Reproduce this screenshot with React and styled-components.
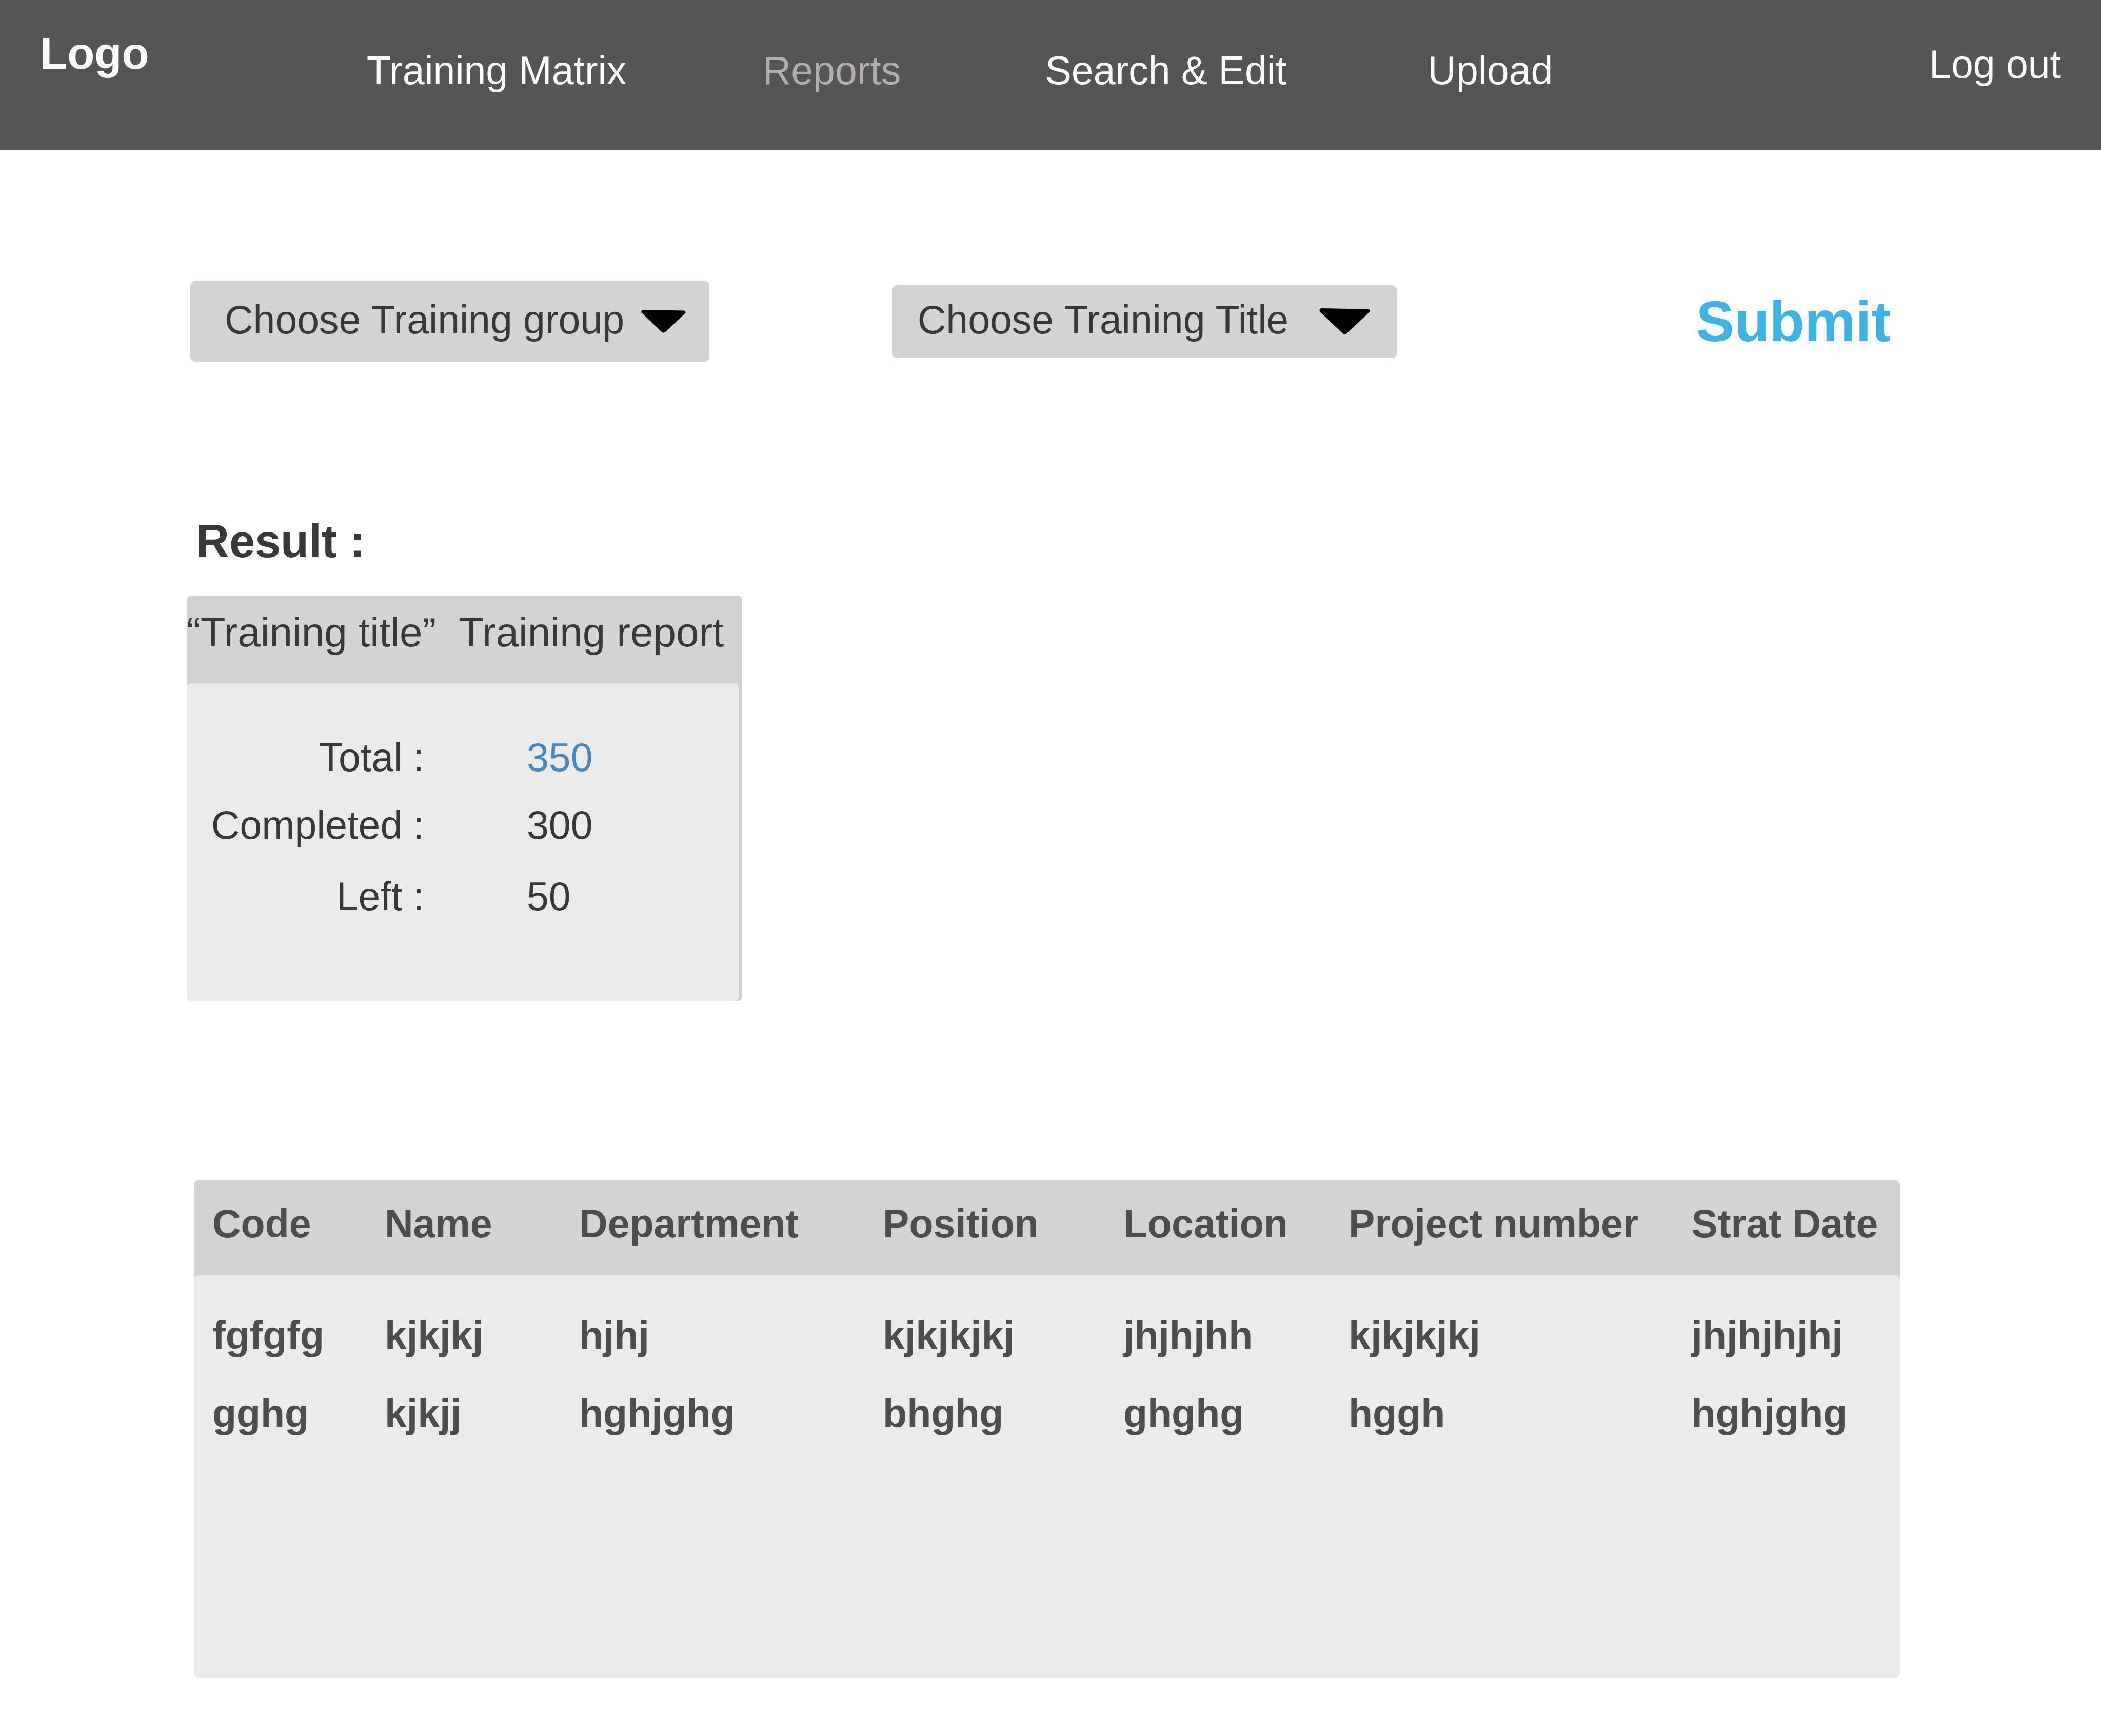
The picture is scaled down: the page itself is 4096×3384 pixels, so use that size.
import React from "react";
import styled, { createGlobalStyle } from "styled-components";

const color = {
  bar: "#555555",
  barText: "#fdfcfd",
  barMuted: "#b3aeae",
  panel: "#d4d2d3",
  body: "#ebebeb",
  ink: "#393738",
  cell: "#4d4d4d",
  accent: "#3bb3e4",
  link: "#4689be",
};

const GlobalStyle = createGlobalStyle`
  *, *::before, *::after { box-sizing: border-box; }
  body {
    margin: 0;
    background: #ffffff;
    color: ${color.ink};
    font-family: "Liberation Sans", Arial, sans-serif;
    font-size: 77px;
    line-height: 88px;
  }
`;

const Header = styled.header`
  display: grid;
  grid-template-columns: 637fr 3047fr auto;
  align-items: start;
  min-height: 292px;
  padding: 54px 78px 0;
  background: ${color.bar};
`;

const Logo = styled.a`
  color: ${color.barText};
  font-size: 87px;
  font-weight: 700;
  line-height: 100px;
  text-decoration: none;
`;

const Nav = styled.nav`
  display: grid;
  grid-template-columns: 772fr 551fr 746fr 978fr;
  padding-top: 39px;
`;

const BarLink = styled.a`
  color: ${(p) => (p.$muted ? color.barMuted : color.barText)};
  text-decoration: none;
  white-space: nowrap;
`;

const Session = styled.div`
  padding-top: 27px;
`;

const Main = styled.main`
  padding: 256px 392px 114px 364px;
`;

const Filters = styled.form`
  display: grid;
  grid-template-columns: 1011fr 983fr 607fr;
  column-gap: 356px;
  align-items: center;
  padding: 0 18px 0 7px;
`;

const Picker = styled.div`
  display: grid;
  grid-template-columns: 1fr;
  align-items: center;
  height: ${(p) => (p.$tall ? 157 : 142)}px;
  border-radius: 9px;
  background: ${color.panel};

  > * {
    grid-area: 1 / 1;
  }

  > svg {
    justify-self: end;
    width: ${(p) => (p.$tall ? 87 : 99)}px;
    margin-right: ${(p) => (p.$tall ? 46 : 52)}px;
    pointer-events: none;
  }
`;

const Select = styled.select`
  appearance: none;
  width: 100%;
  height: 100%;
  margin: 0;
  padding: 0 0 8px ${(p) => (p.$tall ? 67 : 50)}px;
  border: 0;
  border-radius: 9px;
  background: transparent;
  color: ${color.ink};
  font: inherit;
`;

const Submit = styled.button`
  justify-self: end;
  padding: 0;
  border: 0;
  background: none;
  color: ${color.accent};
  font-family: inherit;
  font-size: 112px;
  font-weight: 700;
  line-height: 128px;
`;

const ResultTitle = styled.h2`
  margin: 300px 0 56px;
  padding-left: 18px;
  font-size: 90px;
  font-weight: 700;
  line-height: 100px;
`;

const Card = styled.section`
  width: 1083px;
  max-width: 100%;
  padding-right: 7px;
  border-radius: 9px;
  background: ${color.panel};
`;

const CardTitle = styled.h3`
  display: flex;
  gap: 44px;
  min-height: 171px;
  margin: 0;
  padding-top: 28px;
  font-size: 80px;
  font-weight: 400;
  white-space: nowrap;
`;

const Stats = styled.dl`
  display: grid;
  grid-template-columns: 463px 1fr;
  grid-template-rows: 132px 139px 88px;
  column-gap: 200px;
  min-height: 619px;
  margin: 0;
  padding-top: 100px;
  border-radius: 9px;
  background: ${color.body};
`;

const StatLabel = styled.dt`
  text-align: right;
`;

const StatValue = styled.dd`
  margin: 0;

  a {
    color: ${color.link};
    text-decoration: none;
  }
`;

const TablePanel = styled.div`
  margin: 350px 0 0 14px;
  border-radius: 9px;
  background: ${color.panel};
  overflow: hidden;
`;

const Table = styled.table`
  width: 100%;
  table-layout: fixed;
  border-spacing: 0;
  color: ${color.cell};
  font-weight: 700;
`;

const Col = styled.col`
  width: ${(p) => p.$share}%;
`;

const HeadCell = styled.th`
  height: 185px;
  padding: 40px 0 0 36px;
  text-align: left;
  vertical-align: top;
  white-space: nowrap;
`;

const Cell = styled.td`
  padding: 0 0 0 36px;
  vertical-align: top;
  background: ${color.body};
`;

const Row = styled.tr`
  &:first-child > td {
    height: 225px;
    padding-top: 73px;
  }
  &:last-child > td {
    height: 559px;
  }
  &:first-child > td:first-child {
    border-top-left-radius: 9px;
  }
  &:first-child > td:last-child {
    border-top-right-radius: 9px;
  }
`;

const links = ["Training Matrix", "Reports", "Search & Edit", "Upload"];

const columns = [
  ["Code", 10.1],
  ["Name", 11.4],
  ["Department", 17.8],
  ["Position", 14.1],
  ["Location", 13.2],
  ["Project number", 20.1],
  ["Strat Date", 13.3],
];

const rows = [
  ["fgfgfg", "kjkjkj", "hjhj", "kjkjkjkj", "jhjhjhh", "kjkjkjkj", "jhjhjhjhj"],
  ["gghg", "kjkjj", "hghjghg", "bhghg", "ghghg", "hggh", "hghjghg"],
];

function Arrow() {
  return (
    <svg viewBox="0 0 112 58" aria-hidden="true">
      <path d="M5 0 L108 2 Q113 3 111 8 L60 56 Q56 59 52 56 L1 7 Q-1 1 5 0 Z" fill="#000" />
    </svg>
  );
}

function Choice({ text, tall }) {
  return (
    <Picker $tall={tall}>
      <Select $tall={tall} aria-label={text}>
        <option>{text}</option>
      </Select>
      <Arrow />
    </Picker>
  );
}

export default function App() {
  return (
    <>
      <GlobalStyle />
      <Header>
        <Logo href="#home">Logo</Logo>
        <Nav>
          {links.map((name) => (
            <div key={name}>
              <BarLink href="#" $muted={name === "Reports"}>
                {name}
              </BarLink>
            </div>
          ))}
        </Nav>
        <Session>
          <BarLink href="#logout">Log out</BarLink>
        </Session>
      </Header>
      <Main>
        <Filters onSubmit={(e) => e.preventDefault()}>
          <Choice text="Choose Training group" tall />
          <Choice text="Choose Training Title" />
          <Submit type="submit">Submit</Submit>
        </Filters>

        <ResultTitle>Result :</ResultTitle>
        <Card>
          <CardTitle>
            <span>“Training title”</span>
            <span>Training report</span>
          </CardTitle>
          <Stats>
            <StatLabel>Total :</StatLabel>
            <StatValue>
              <a href="#total">350</a>
            </StatValue>
            <StatLabel>Completed :</StatLabel>
            <StatValue>300</StatValue>
            <StatLabel>Left :</StatLabel>
            <StatValue>50</StatValue>
          </Stats>
        </Card>

        <TablePanel>
          <Table>
            <colgroup>
              {columns.map(([name, share]) => (
                <Col key={name} $share={share} />
              ))}
            </colgroup>
            <thead>
              <tr>
                {columns.map(([name]) => (
                  <HeadCell key={name} scope="col">
                    {name}
                  </HeadCell>
                ))}
              </tr>
            </thead>
            <tbody>
              {rows.map((cells) => (
                <Row key={cells[0]}>
                  {cells.map((value, i) => (
                    <Cell key={i}>{value}</Cell>
                  ))}
                </Row>
              ))}
            </tbody>
          </Table>
        </TablePanel>
      </Main>
    </>
  );
}
